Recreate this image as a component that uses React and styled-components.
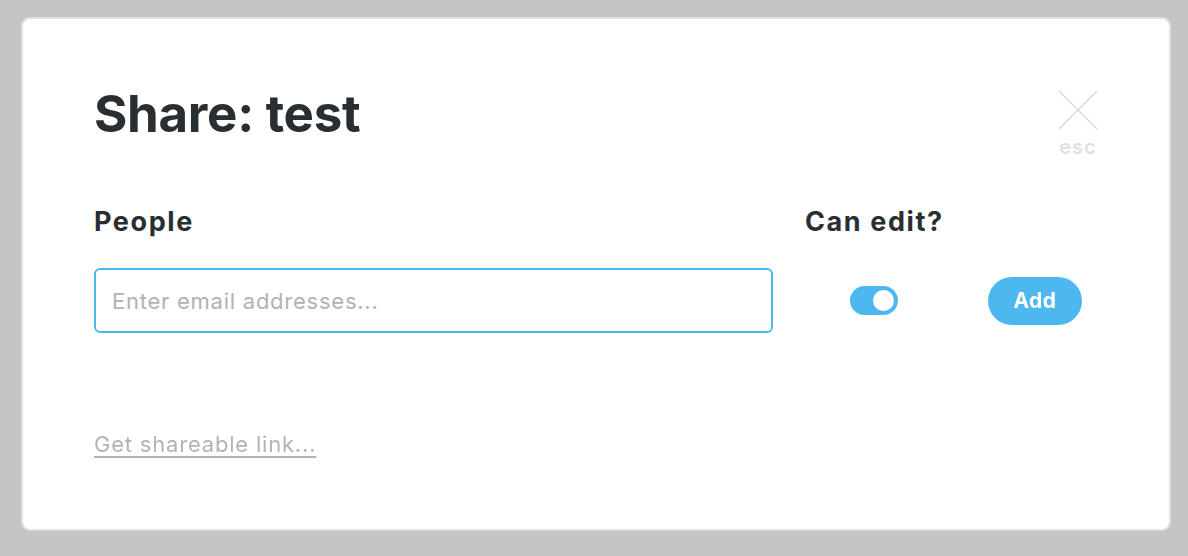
import React, { useState } from "react";
import styled, { createGlobalStyle } from "styled-components";

const GlobalStyle = createGlobalStyle`
  html, body {
    margin: 0;
    padding: 0;
    background: #c4c4c4;
    font-family: Inter, "Noto Sans", sans-serif;
  }
`;

const App = () => {
  const [email, setEmail] = useState("");
  const [canEdit, setCanEdit] = useState(true);

  return (
    <>
      <GlobalStyle />
      <Page>
        <Modal>
          <Header>
            <Title>Share: test</Title>
            <Close>
              <svg width="40" height="40" viewBox="0 0 40 40">
                <path d="M1 1 L39 39 M39 1 L1 39" stroke="#d9dde0" strokeWidth="1.6" fill="none" />
              </svg>
              <span>esc</span>
            </Close>
          </Header>
          <ShareGrid>
            <Label>People</Label>
            <Label>Can edit?</Label>
            <div />
            <EmailInput
              autoFocus
              value={email}
              onChange={(e) => setEmail(e.target.value)}
              placeholder="Enter email addresses..."
            />
            <ToggleCell>
              <Toggle $on={canEdit} onClick={() => setCanEdit(!canEdit)}>
                <span />
              </Toggle>
            </ToggleCell>
            <AddButton>Add</AddButton>
          </ShareGrid>
          <LinkText href="#">Get shareable link...</LinkText>
        </Modal>
      </Page>
    </>
  );
};

const Page = styled.div`
  padding: 17px 17px 0 21px;
  height: 556px;
  box-sizing: border-box;
`;

const Modal = styled.div`
  width: 1150px;
  height: 514px;
  box-sizing: border-box;
  background: #fff;
  border: 2px solid #dde0e2;
  border-radius: 9px;
  padding: 0 71px;
  display: flex;
  flex-direction: column;
`;

const Header = styled.div`
  display: flex;
  justify-content: space-between;
  align-items: flex-start;
  padding-top: 65px;
`;

const Title = styled.h1`
  margin: 0;
  font-size: 51px;
  line-height: 60px;
  font-weight: 700;
  letter-spacing: -0.3px;
  color: #292e33;
`;

const Close = styled.div`
  display: flex;
  flex-direction: column;
  align-items: center;
  margin-top: 6px;
  cursor: pointer;
  span {
    font-size: 20px;
    font-weight: 600;
    letter-spacing: 1px;
    color: #dde1e3;
    line-height: 20px;
    margin-top: 7px;
  }
`;

const ShareGrid = styled.div`
  display: grid;
  grid-template-columns: 679px 137px 1fr;
  column-gap: 32px;
  row-gap: 31px;
  margin-top: 50px;
  align-items: center;
`;

const Label = styled.div`
  font-size: 27px;
  font-weight: 700;
  line-height: 30px;
  letter-spacing: 1.6px;
  color: #292e33;
  white-space: nowrap;
`;

const EmailInput = styled.input`
  height: 65px;
  box-sizing: border-box;
  border: 2px solid #4db8ef;
  border-radius: 6px;
  padding: 0 16px;
  font-family: inherit;
  font-size: 22px;
  letter-spacing: 0.75px;
  color: #292e33;
  caret-color: #292e33;
  outline: none;
  &::placeholder {
    color: #aeb3b8;
  }
`;

const ToggleCell = styled.div`
  display: flex;
  justify-content: center;
`;

const Toggle = styled.div`
  width: 48px;
  height: 29px;
  border-radius: 15px;
  background: ${(p) => (p.$on ? "#4db8f0" : "#d9dde0")};
  display: flex;
  align-items: center;
  justify-content: ${(p) => (p.$on ? "flex-end" : "flex-start")};
  padding: 0 4px;
  box-sizing: border-box;
  cursor: pointer;
  span {
    width: 21px;
    height: 21px;
    border-radius: 50%;
    background: #fff;
  }
`;

const AddButton = styled.button`
  justify-self: end;
  margin-right: 16px;
  width: 94px;
  height: 48px;
  border: none;
  border-radius: 24px;
  background: #4db8f0;
  color: #fff;
  font-family: inherit;
  font-size: 21px;
  font-weight: 700;
  letter-spacing: 0.5px;
  cursor: pointer;
`;

const LinkText = styled.a`
  align-self: flex-start;
  margin-top: 98px;
  font-size: 22px;
  letter-spacing: 0.8px;
  color: #b0b4b8;
  text-decoration: underline;
  text-decoration-thickness: 2px;
  text-underline-offset: 4px;
`;

export default App;
